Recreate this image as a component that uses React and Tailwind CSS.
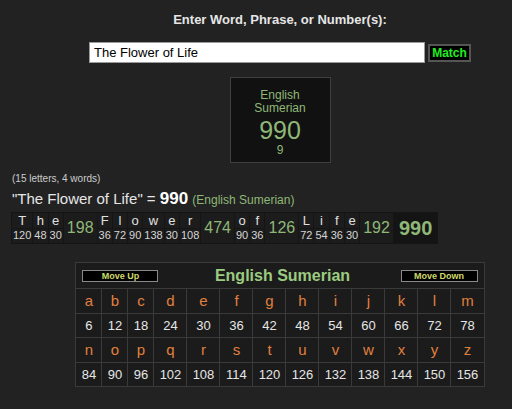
const letters = "abcdefghijklm".split("");
const letters2 = "nopqrstuvwxyz".split("");
const words = [
  { chars: ["T", "h", "e"], vals: [120, 48, 30], sum: 198 },
  { chars: ["F", "l", "o", "w", "e", "r"], vals: [36, 72, 90, 138, 30, 108], sum: 474 },
  { chars: ["o", "f"], vals: [90, 36], sum: 126 },
  { chars: ["L", "i", "f", "e"], vals: [72, 54, 36, 30], sum: 192 },
];

function Breakdown() {
  return (
    <table className="border-separate border-spacing-[1px] bg-[#151515] ml-[11px]">
      <tbody>
        <tr>
          {words.map((w, i) => (
            <>
              {w.chars.map((c, j) => (
                <td
                  key={`${i}-${j}`}
                  className="bg-[#1c1c1c] text-[#e0e0e0] text-[13px] leading-[14px] text-center px-[1px] pt-[1px]">
                  {c}
                </td>
              ))}
              <td
                key={`s${i}`}
                rowSpan={2}
                className="bg-[#1c1c1c] text-[#8fb877] text-[16px] text-center px-[3px]">
                {w.sum}
              </td>
            </>
          ))}
          <td
            rowSpan={2}
            className="bg-[#141414] text-[#8fb877] text-[20px] font-bold text-center px-[5px]">
            990
          </td>
        </tr>
        <tr>
          {words.map((w, i) =>
            w.vals.map((v, j) => (
              <td
                key={`v${i}-${j}`}
                className="bg-[#1c1c1c] text-[#d6d6d6] text-[11px] leading-[13px] text-center px-[1px] pb-[1px]">
                {v}
              </td>
            ))
          )}
        </tr>
      </tbody>
    </table>
  );
}

function Chart() {
  const widths = letters.map((_, i) => (i < 3 ? 26 : 33));
  return (
    <table className="border-collapse border border-[#3a3a3a] bg-[#1b1b1b] w-[408px] table-fixed">
      <colgroup>
        {widths.map((w, i) => (
          <col key={i} style={{ width: w }} />
        ))}
      </colgroup>
      <tbody>
        <tr>
          <td colSpan={13} className="border border-[#3a3a3a] h-[26px] px-[6px]">
            <div className="flex items-center justify-between">
              <button className="w-[76px] h-[12px] bg-black border border-[#8a8a8a] text-[#cfd86a] text-[9px] font-bold leading-[10px]">
                Move Up
              </button>
              <span className="text-[16px] font-bold text-[#9ccc80] ml-[6px]">
                English Sumerian
              </span>
              <button className="w-[77px] h-[12px] bg-black border border-[#8a8a8a] text-[#cfd86a] text-[9px] font-bold leading-[10px]">
                Move Down
              </button>
            </div>
          </td>
        </tr>
        {[letters, letters2].map((row, r) => (
          <>
            <tr key={`l${r}`}>
              {row.map((l) => (
                <td
                  key={l}
                  className="border border-[#3a3a3a] h-[25px] text-center text-[15px] text-[#e0803f]">
                  {l}
                </td>
              ))}
            </tr>
            <tr key={`n${r}`}>
              {row.map((l, i) => (
                <td
                  key={l}
                  className="border border-[#3a3a3a] h-[24px] text-center text-[13px] text-[#e6e6e6]">
                  {(r * 13 + i + 1) * 6}
                </td>
              ))}
            </tr>
          </>
        ))}
      </tbody>
    </table>
  );
}

export default function App() {
  return (
    <div className="min-h-screen w-[512px] h-[409px] bg-[#222222] font-['Liberation_Sans',Arial,sans-serif] overflow-hidden">
      <div className="pl-12 flex flex-col items-center pt-[12px]">
        <h1 className="text-[13px] leading-[15px] font-bold text-[#e6e6e6]">
          Enter Word, Phrase, or Number(s):
        </h1>
        <div className="flex items-center mt-[15px] gap-[3px]">
          <input
            defaultValue="The Flower of Life"
            className="w-[336px] h-[21px] bg-white border border-[#9a9a9a] px-[4px] text-[13px] text-black outline-none"
          />
          <button className="w-[43px] h-[18px] bg-black border-2 border-[#555] text-[#22ee22] text-[12px] font-bold leading-[14px]">
            Match
          </button>
        </div>
        <div className="mt-[14px] w-[101px] h-[86px] bg-[#111111] border border-[#3f3f3f] flex flex-col items-center pt-[11px] text-[#8fb877]">
          <div className="text-[12px] leading-[13px]">English</div>
          <div className="text-[12px] leading-[13px]">Sumerian</div>
          <div className="text-[25px] leading-[26px] mt-[2px]">990</div>
          <div className="text-[12px] leading-[14px]">9</div>
        </div>
      </div>
      <div className="mt-[9px] ml-[12px] text-[10px] leading-[13px] text-[#cccccc]">
        (15 letters, 4 words)
      </div>
      <div className="ml-[12px] mt-[5px] text-[15px] leading-[18px] text-[#e6e6e6]">
        "The Flower of Life" ={" "}
        <span className="text-[17px] font-bold text-white">990</span>{" "}
        <span className="text-[12px] text-[#8fb877]">(English Sumerian)</span>
      </div>
      <div className="mt-[3px]">
        <Breakdown />
      </div>
      <div className="pl-12 flex justify-center mt-[18px]">
        <Chart />
      </div>
    </div>
  );
}
